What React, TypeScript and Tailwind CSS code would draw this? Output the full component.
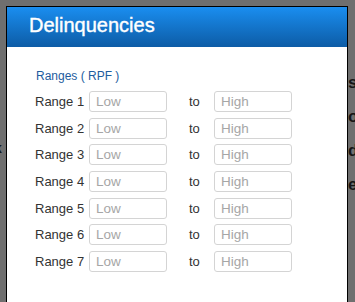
const ranges = [1, 2, 3, 4, 5, 6, 7];

function RangeRow({ n }: { n: number }) {
  return (
    <div className="flex items-center h-[21px]">
      <span className="w-[54px] text-[13px] text-[#333333] leading-[15px]">Range {n}</span>
      <input
        type="text"
        placeholder="Low"
        className="w-[78px] h-[21px] border border-[#d4d4d4] rounded-[3px] px-[6px] text-[13.5px] text-[#333] placeholder:text-[#a6a6a6] outline-none bg-white"
      />
      <span className="ml-[22px] w-[25px] text-[13px] text-[#333333] leading-[15px]">to</span>
      <input
        type="text"
        placeholder="High"
        className="w-[78px] h-[21px] border border-[#d4d4d4] rounded-[3px] px-[6px] text-[13.5px] text-[#333] placeholder:text-[#a6a6a6] outline-none bg-white"
      />
    </div>
  );
}

export default function App() {
  return (
    <div
      className="relative w-[355px] h-[302px] overflow-hidden bg-[#6f6f6f]"
      style={{ fontFamily: '"Liberation Sans", Arial, sans-serif' }}
    >
      {/* dimmed page behind the dialog */}
      <div className="absolute left-[348px] top-[66px] flex flex-col text-[17px] font-bold text-[#161616] leading-[34px]">
        <span>s</span>
        <span>o</span>
        <span>d</span>
        <span>ec</span>
      </div>
      <span className="absolute left-[-6px] top-[138px] text-[14px] font-bold text-[#161616]">k</span>

      <div className="absolute left-[6px] top-[6px] w-[342px] border border-black bg-white">
        <div className="h-[40px] bg-gradient-to-b from-[#1a8ef0] to-[#0d5ca6] pl-[22px] pt-[7px]">
          <h1 className="text-[20px] leading-[23px] text-white [-webkit-text-stroke:0.4px_white]">
            Delinquencies
          </h1>
        </div>
        <div className="pl-[28px] pt-[22px] pb-[40px]">
          <p className="text-[12px] leading-[14px] text-[#1d5c9e] pl-[1px]">Ranges ( RPF )</p>
          <div className="mt-[8px] flex flex-col gap-[5.66px]">
            {ranges.map((n) => (
              <RangeRow key={n} n={n} />
            ))}
          </div>
        </div>
      </div>
    </div>
  );
}
